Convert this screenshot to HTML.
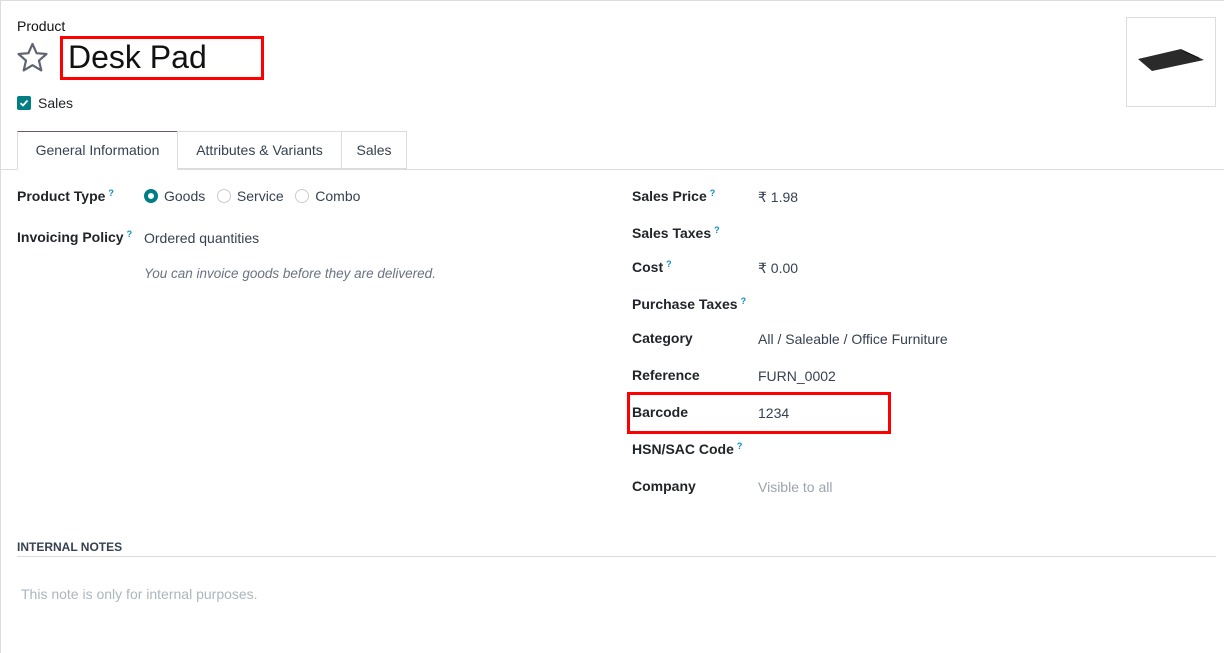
<!DOCTYPE html>
<html><head><meta charset="utf-8"><style>
*{box-sizing:border-box;margin:0;padding:0}
body{width:1224px;height:653px;background:#fff;font-family:"Liberation Sans","DejaVu Sans",sans-serif;color:#212529;font-size:14px;position:relative;overflow:hidden}
.a{position:absolute;white-space:nowrap}
.lbl{font-weight:bold;color:#212529;font-size:14px}
.q{color:#0d8fbd;font-size:9px;vertical-align:top;font-weight:bold;margin-left:3px}
.val{color:#374151}
.red{position:absolute;border:3px solid #f00}
.radio{display:inline-block;width:14px;height:14px;border:1px solid #ccc;border-radius:50%;vertical-align:-2px;margin-right:6px}
</style></head><body>
<div class="a" style="left:0;top:0;width:1224px;height:1px;background:#dcdcdc"></div>
<div class="a" style="left:0;top:0;width:1px;height:653px;background:#dcdcdc"></div>
<div class="a" style="left:17px;top:18px;font-size:14px;color:#111">Product</div>
<svg class="a" style="left:16px;top:42px" width="33" height="31" viewBox="0 0 33 31"><path d="M16.5 2 L20.6 11.2 L30.5 12 L23 18.6 L25.3 28.4 L16.5 23.2 L7.7 28.4 L10 18.6 L2.5 12 L12.4 11.2 Z" fill="none" stroke="#5f6470" stroke-width="2.2" stroke-linejoin="round"/></svg>
<div class="a" style="left:68px;top:39px;font-size:32px;color:#111">Desk Pad</div>
<div class="red" style="left:60px;top:36px;width:204px;height:44px"></div>
<div class="a" style="left:17px;top:96px;width:14px;height:14px;background:#017e84;border-radius:2px"><svg width="14" height="14"><path d="M3.5 7.2 L6 9.5 L10.5 4.5" stroke="#fff" stroke-width="1.8" fill="none"/></svg></div>
<div class="a" style="left:38px;top:95px">Sales</div>
<div class="a" style="left:1126px;top:17px;width:90px;height:90px;border:1px solid #dcdcdc"><svg width="88" height="88"><path d="M11 41 L54 31 L77 42 L25 53 Z" fill="#2a2a2a"/><path d="M56 33 L72 40" stroke="#111" stroke-width="1"/></svg></div>
<div class="a" style="left:0;top:169px;width:1224px;height:1px;background:#dcdcdc"></div>
<div class="a" style="left:17px;top:131px;width:161px;height:39px;border:1px solid #dcdcdc;border-bottom:1px solid #fff;background:#fff;border-top-color:#6e5a66;text-align:center;line-height:37px;color:#374151">General Information</div>
<div class="a" style="left:177px;top:131px;width:165px;height:38px;border:1px solid #dcdcdc;text-align:center;line-height:37px;color:#374151">Attributes &amp; Variants</div>
<div class="a" style="left:341px;top:131px;width:66px;height:38px;border:1px solid #dcdcdc;text-align:center;line-height:37px;color:#374151">Sales</div>
<div class="a lbl" style="left:17px;top:188px">Product Type<span class="q">?</span></div>
<div class="a val" style="left:144px;top:188px"><span class="radio" style="border:4px solid #017e84"></span>Goods&nbsp;&nbsp;&nbsp;<span class="radio"></span>Service&nbsp;&nbsp;&nbsp;<span class="radio"></span>Combo</div>
<div class="a lbl" style="left:17px;top:229px">Invoicing Policy<span class="q">?</span></div>
<div class="a val" style="left:144px;top:230px">Ordered quantities</div>
<div class="a" style="left:144px;top:266px;font-style:italic;color:#6b7280;font-size:13.5px">You can invoice goods before they are delivered.</div>
<div class="a lbl" style="left:632px;top:188px">Sales Price<span class="q">?</span></div><div class="a val" style="left:758px;top:189px">₹ 1.98</div>
<div class="a lbl" style="left:632px;top:225px">Sales Taxes<span class="q">?</span></div>
<div class="a lbl" style="left:632px;top:259px">Cost<span class="q">?</span></div><div class="a val" style="left:758px;top:260px">₹ 0.00</div>
<div class="a lbl" style="left:632px;top:296px">Purchase Taxes<span class="q">?</span></div>
<div class="a lbl" style="left:632px;top:330px">Category</div><div class="a val" style="left:758px;top:331px">All / Saleable / Office Furniture</div>
<div class="a lbl" style="left:632px;top:367px">Reference</div><div class="a val" style="left:758px;top:368px">FURN_0002</div>
<div class="a lbl" style="left:632px;top:404px">Barcode</div><div class="a val" style="left:758px;top:405px">1234</div>
<div class="red" style="left:627px;top:392px;width:264px;height:42px"></div>
<div class="a lbl" style="left:632px;top:441px">HSN/SAC Code<span class="q">?</span></div>
<div class="a lbl" style="left:632px;top:478px">Company</div><div class="a" style="left:758px;top:479px;color:#9ca3af">Visible to all</div>
<div class="a" style="left:17px;top:540px;font-weight:bold;font-size:12px;color:#374151">INTERNAL NOTES</div>
<div class="a" style="left:17px;top:556px;width:1199px;height:1px;background:#dcdcdc"></div>
<div class="a" style="left:21px;top:586px;color:#adb5bd">This note is only for internal purposes.</div>
</body></html>
